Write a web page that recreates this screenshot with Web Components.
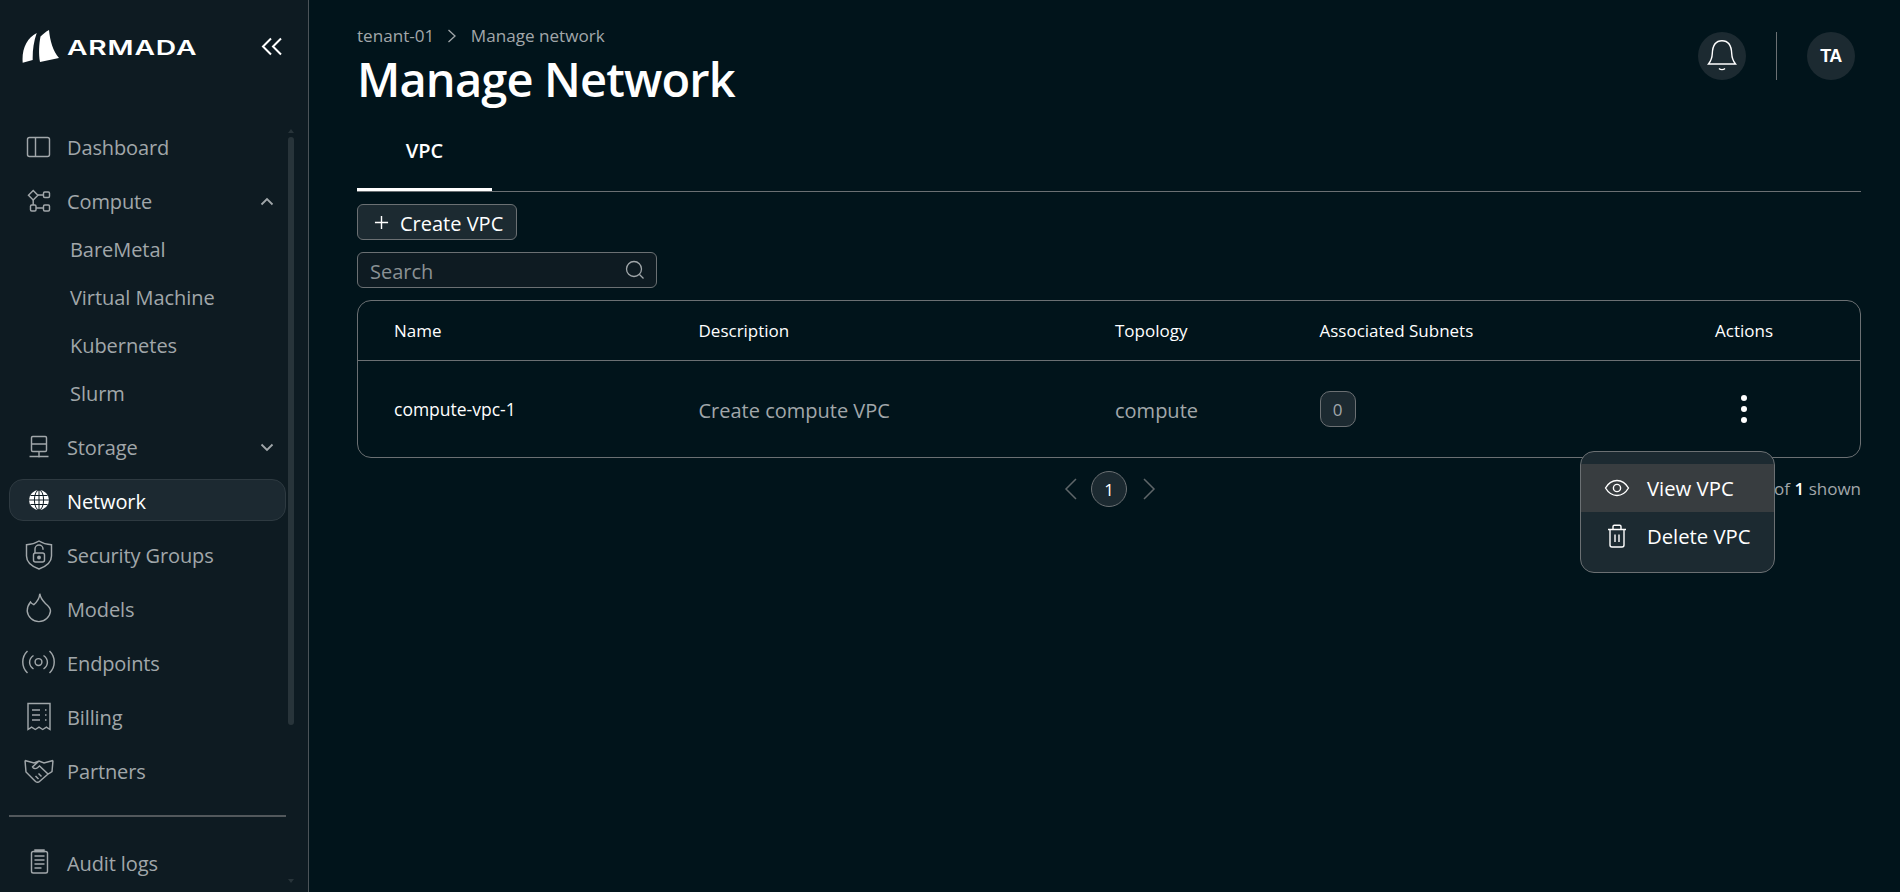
<!DOCTYPE html>
<html lang="en"><head><meta charset="utf-8"><title>Manage Network</title>
<style>
html,body{margin:0;height:100%;background:#01141b;overflow:hidden}
body{font-family:"Open Sans","Noto Sans",sans-serif;color:#fff}
app-shell{height:892px}
</style></head><body>
<app-shell>
  <app-sidebar slot="sidebar">
    <nav-item label="Dashboard" icon="dashboard"></nav-item>
    <nav-item label="Compute" icon="compute" caret="up" style="margin-bottom:4px"></nav-item>
    <nav-sub>BareMetal</nav-sub>
    <nav-sub>Virtual Machine</nav-sub>
    <nav-sub>Kubernetes</nav-sub>
    <nav-sub>Slurm</nav-sub>
    <nav-item label="Storage" icon="storage" caret="down" style="margin-top:8px;margin-bottom:11px"></nav-item>
    <nav-item label="Network" icon="network" active style="margin-bottom:13px"></nav-item>
    <nav-item label="Security Groups" icon="security"></nav-item>
    <nav-item label="Models" icon="models"></nav-item>
    <nav-item label="Endpoints" icon="endpoints"></nav-item>
    <nav-item label="Billing" icon="billing"></nav-item>
    <nav-item label="Partners" icon="partners" style="margin-bottom:0"></nav-item>
    <nav-item slot="footer" label="Audit logs" icon="audit"></nav-item>
  </app-sidebar>
  <page-header></page-header>
  <page-tabs></page-tabs>
  <vpc-toolbar></vpc-toolbar>
  <vpc-table></vpc-table>
</app-shell>
<script>
const ICONS={
dashboard:'<rect x="6.5" y="8.5" width="22" height="19" rx="2"/><path d="M14.5 8.5v19"/>',
compute:'<path d="M12.2 7.5l4.7 4.7-4.7 4.7-4.7-4.7z"/><rect x="22.5" y="9" width="6" height="5.5" rx="1.2"/><rect x="9.5" y="22" width="5.5" height="6" rx="1.2"/><rect x="22.5" y="22" width="6" height="6" rx="1.2"/><path d="M17 12h5.500M15 25h7.500M12.200 17v5"/>',
storage:'<rect x="10.500" y="7.500" width="15" height="15" rx="1.200"/><path d="M10.500 15h15M18 22.500v6M8.500 27.500h19"/>',
network:'<circle cx="18" cy="18" r="10" fill="#fff" stroke="none"/><g stroke="#0f1c23" stroke-width="1"><ellipse cx="18" cy="18" rx="4.600" ry="10"/><path d="M18 8v20M8 18h20M9.500 13.500h17M9.500 22.500h17"/></g>',
security:'<path d="M18 4C22 6.500 26 7.500 30.500 7.800V19C30.500 25.500 25 29.500 18 32 11 29.500 5.500 25.500 5.500 19V7.800C10 7.500 14 6.500 18 4z"/><rect x="12.500" y="16" width="11" height="9" rx="2"/><path d="M14 16v-4a4 4 0 0 1 8 0v.8"/><circle cx="18" cy="20.500" r="1.200" fill="currentColor"/>',
models:'<path d="M18.800 2.700C19.500 8 22 10 25 13 28 15.500 29.500 17 29.500 20A11.700 11.700 0 0 1 6.200 20C6.200 16.500 7.500 13.500 9.500 11 10 12 11.500 13 12.800 13.700 15.800 11 18.500 7 18.800 2.700z"/>',
endpoints:'<circle cx="17.500" cy="17" r="3.400"/><path d="M12.500 10.500C7.300 14 7.300 20.500 12.500 24M22.500 10.500C27.700 14 27.700 20.500 22.500 24M6.500 6C.2 12 .2 22 6.500 28M28.500 6C34.800 12 34.800 22 28.500 28"/>',
billing:'<path d="M7 4.500h22v26l-3.600-2.400-3.700 2.400-3.700-2.400-3.700 2.400-3.700-2.400L7 30.500z"/><path d="M11 11h8M11 16h8M11 21h8M24 11h1.500M24 16h1.500M24 21h1.500"/>',
partners:'<path d="M4 7.500l9 2.500 5-2 5 2 9-2.500M4 7.500L5 19l9.500 9.500c1.300 1 3 1 4 0l8-7 4.500-3L32 7.500M18 8l-6.500 6c1 2 3.500 2 5 .7l2-1.700 8.500 8M20.500 23.500l-3-3M17.500 26l-3-3"/>',
audit:'<rect x="10.500" y="6.500" width="16" height="21.500" rx="1.800"/><path d="M14 6.500h9v-1.500h-9z" fill="currentColor"/><path d="M13.500 11h10M13.500 15h10M13.500 19h10M13.500 23h7"/>'
};
const def=(n,c)=>customElements.define(n,c);
const mk=(h,css)=>{const t=document.createElement('template');t.innerHTML=`<style>${css}</style>${h}`;return t};

def('app-shell',class extends HTMLElement{connectedCallback(){
 const r=this.attachShadow({mode:'open'});
 r.appendChild(mk(`<slot name="sidebar"></slot><main><slot></slot></main>`,`
 :host{display:flex;width:1900px;height:892px;overflow:hidden}
 main{flex:1;min-width:0;box-sizing:border-box;padding:24px 39px 0 48px;display:flex;flex-direction:column}
 `).content.cloneNode(true));
}});

def('app-sidebar',class extends HTMLElement{connectedCallback(){
 const r=this.attachShadow({mode:'open'});
 r.appendChild(mk(`
 <div class="brand">
  <svg class="logo" width="40" height="36" viewBox="0 0 40 36" aria-hidden="true">
   <path d="M.700 34.700C-.500 21 5 10 14.700 5 11.500 14 10.500 23 10.700 32z" fill="#fff"/>
   <path d="M18 34C16.500 26 17 16 18.500 8.500 21 6 24 3.500 27 2 28 13 31 23 37 30z" fill="#fff"/>
  </svg>
  <span class="word">ARMADA</span>
  <svg class="collapse" width="22" height="20" viewBox="0 0 22 20" fill="none" stroke="#fff" stroke-width="2" aria-hidden="true"><path d="M10 1.500L2 9.500l8 8M20 1.500l-8 8 8 8"/></svg>
 </div>
 <div class="scroller">
  <div class="list"><slot></slot><hr><slot name="footer"></slot></div>
  <div class="bar"><i class="up"></i><b></b><i class="down"></i></div>
 </div>`,`
 :host{display:flex;flex-direction:column;flex:none;width:309px;height:892px;box-sizing:border-box;background:#0e1b22;border-right:1px solid #4b5358;overflow:hidden}
 .brand{height:126px;flex:none;display:flex;align-items:flex-start;padding:28px 0 0 22px;box-sizing:border-box;position:relative}
 .logo{flex:none}
 .word{font:600 20px/1 Inter,"Liberation Sans",sans-serif;letter-spacing:.6px;margin:10px 0 0 5px;transform:scaleX(1.41);transform-origin:left;display:block}
 .collapse{position:absolute;left:261px;top:37px}
 .scroller{flex:1;display:flex;min-height:0;padding-left:9px}
 .list{width:277px;flex:none;display:flex;flex-direction:column}
 hr{width:100%;height:2px;border:0;background:#52585c;margin:23px 0 25px;flex:none}
 .bar{width:6px;margin-left:2px;position:relative;display:flex;flex-direction:column;align-items:center}
 .bar b{display:block;position:absolute;top:11px;left:0;width:6px;height:588px;border-radius:3px;background:#28343a}
 .up,.down{position:absolute;left:0;width:0;height:0;border-left:3px solid transparent;border-right:3px solid transparent}
 .up{top:3px;border-bottom:4px solid #28343a}
 .down{top:753px;border-top:4px solid #28343a}
 `).content.cloneNode(true));
}});

def('nav-item',class extends HTMLElement{connectedCallback(){
 const r=this.attachShadow({mode:'open'});
 const caret=this.getAttribute('caret');
 const car=caret?`<svg class="caret" width="14" height="9" viewBox="0 0 14 9" fill="none" stroke="currentColor" stroke-width="1.800"><path d="${caret==='up'?'M1.500 7.500L7 2l5.500 5.500':'M1.500 1.500L7 7l5.500-5.500'}"/></svg>`:'';
 r.appendChild(mk(`<svg class="ic" width="36" height="36" viewBox="0 0 36 36" fill="none" stroke="currentColor" stroke-width="1.450" aria-hidden="true">${ICONS[this.getAttribute('icon')]}</svg><span>${this.getAttribute('label')}</span>${car}`,`
 :host{display:flex;align-items:center;height:42px;margin-bottom:12px;box-sizing:border-box;color:#a1a7aa;font-size:20px;position:relative;border:1px solid transparent;border-radius:14px;flex:none;letter-spacing:-.12px}
 :host([active]){background:#1c2931;border-color:#2e3a41;color:#fff;font-weight:500}
 :host([active]) span{padding-top:2px}
 .ic{flex:none;margin-left:10.500px}
 span{margin-left:10.500px;white-space:nowrap}
 .caret{position:absolute;left:250px;top:16px}
 `).content.cloneNode(true));
}});

def('nav-sub',class extends HTMLElement{connectedCallback(){
 const r=this.attachShadow({mode:'open'});
 r.appendChild(mk(`<slot></slot>`,`:host{display:block;height:48px;line-height:48px;padding-left:61px;color:#a1a7aa;font-size:20px;flex:none;white-space:nowrap;letter-spacing:-.05px}`).content.cloneNode(true));
}});

def('page-header',class extends HTMLElement{connectedCallback(){
 const r=this.attachShadow({mode:'open'});
 r.appendChild(mk(`
 <div><div class="crumbs"><span>tenant-01</span><svg width="10" height="16" viewBox="0 0 10 16" fill="none" stroke="#a1a7aa" stroke-width="1.300"><path d="M1.500 2l6.500 6-6.500 6"/></svg><span>Manage network</span></div>
 <h1>Manage Network</h1></div>
 <div class="acts">
  <span class="circ"><svg width="32" height="34" viewBox="0 0 32 34" fill="none" stroke="#fff" stroke-width="1.400"><path d="M2.500 25h27c-2.600-3.200-3.600-6-3.800-10.500C25.400 7 22.500 1.800 16 1.800S6.600 7 6.300 14.500C6.100 19 5.100 21.800 2.500 25z"/><path d="M13 29.500c1.500 1.500 4.500 1.500 6 0"/></svg></span>
  <i class="sep"></i>
  <span class="circ ta">TA</span>
 </div>`,`
 :host{display:flex;justify-content:space-between;align-items:flex-start;flex:none;height:88px}
 .crumbs{display:flex;align-items:center;height:23px;font-size:17.100px;color:#a1a7aa;margin-bottom:1px}
 .crumbs svg{margin:0 13.500px 0 13px}
 h1{margin:0;font-size:47px;line-height:63px;font-weight:600;letter-spacing:-.85px;white-space:nowrap}
 .acts{display:flex;align-items:center;margin:8px 6px 0 0}
 .circ{width:48px;height:48px;border-radius:50%;background:#1c2a31;display:flex;align-items:center;justify-content:center}
 .ta{font:700 18px/1 "Liberation Sans",sans-serif;letter-spacing:-.5px;color:#fff}
 .sep{width:1px;height:48px;background:#6b7073;margin:0 30px}
 `).content.cloneNode(true));
}});

def('page-tabs',class extends HTMLElement{connectedCallback(){
 const r=this.attachShadow({mode:'open'});
 r.appendChild(mk(`<div class="tab">VPC</div>`,`
 :host{display:block;height:80px;box-sizing:border-box;border-bottom:1px solid #6b7073;flex:none}
 .tab{width:135px;height:79px;box-sizing:border-box;border-bottom:3px solid #fff;padding-top:23px;text-align:center;font-size:20px;line-height:32px;font-weight:600;margin-bottom:-1px}
 `).content.cloneNode(true));
}});

def('vpc-toolbar',class extends HTMLElement{connectedCallback(){
 const r=this.attachShadow({mode:'open'});
 r.appendChild(mk(`
 <button><svg width="15" height="15" viewBox="0 0 16 16" stroke="#fff" stroke-width="1.500" fill="none"><path d="M8 1v14M1 8h14"/></svg><span>Create VPC</span></button>
 <label class="search"><input placeholder="Search" aria-label="Search"><svg width="20" height="20" viewBox="0 0 20 20" fill="none" stroke="#a1a7aa" stroke-width="1.300"><circle cx="9" cy="9" r="7.500"/><path d="M14.500 14.500l4 4"/></svg></label>`,`
 :host{display:flex;flex-direction:column;align-items:flex-start;gap:12px;margin-top:12px;flex:none}
 button{height:36px;width:160px;box-sizing:border-box;padding:0 0 0 16px;display:flex;align-items:center;gap:11px;background:#1c2a31;border:1px solid #6b7073;border-radius:6px;color:#fff;font:20px "Open Sans",sans-serif;white-space:nowrap}
 button span{padding-top:2px}
 .search{width:300px;height:36px;box-sizing:border-box;display:flex;align-items:center;background:#0e1b22;border:1px solid #6b7073;border-radius:6px;padding:0 11px 0 12px}
 input{flex:1;min-width:0;background:none;border:0;outline:0;color:#fff;font:20px "Open Sans",sans-serif;padding:2px 0 0}
 input::placeholder{color:#8a9194;opacity:1}
 `).content.cloneNode(true));
}});

def('vpc-table',class extends HTMLElement{connectedCallback(){
 const r=this.attachShadow({mode:'open'});
 r.appendChild(mk(`
 <div class="tbl">
  <div class="row head"><div>Name</div><div>Description</div><div>Topology</div><div>Associated Subnets</div><div class="ac">Actions</div></div>
  <div class="row body"><div class="nm">compute-vpc-1</div><div class="t">Create compute VPC</div><div class="t">compute</div><div><span class="badge">0</span></div><div class="dots"><i></i><i></i><i></i></div></div>
 </div>
 <div class="pager">
  <div></div>
  <div class="pages">
   <svg width="16" height="24" viewBox="0 0 16 24" fill="none" stroke="#5f6669" stroke-width="1.500"><path d="M13 2L3 12l10 10"/></svg>
   <span class="pg">1</span>
   <svg class="nx" width="16" height="24" viewBox="0 0 16 24" fill="none" stroke="#5f6669" stroke-width="1.500"><path d="M3 2l10 10L3 22"/></svg>
  </div>
  <div class="shown">1 of <b>1</b> shown</div>
 </div>
 <action-menu></action-menu>`,`
 :host{display:block;margin-top:12px;position:relative;flex:none}
 .tbl{border:1px solid #6b7073;border-radius:14px;height:158px;box-sizing:border-box}
 .row{display:grid;grid-template-columns:304.500px 416.500px 204.500px 395.500px 1fr;padding-left:36px;align-items:center}
 .head{height:59px;border-bottom:1px solid #6b7073;font-size:17px;color:#fff}
 .body{height:96px;font-size:20px;color:#a1a7aa}
 .t{padding-top:2px}
 .nm{font-size:17.500px;color:#fff}
 .badge{display:flex;align-items:center;justify-content:center;width:36px;height:36px;box-sizing:border-box;background:#1c2a31;border:1px solid #6b7073;border-radius:10px;font-size:17px}
 .dots{display:flex;flex-direction:column;gap:5px;align-items:center;width:60px;margin-left:-1px}
 .dots i{width:6px;height:6px;border-radius:50%;background:#fff}
 .pager{display:grid;grid-template-columns:1fr auto 1fr;align-items:center;margin-top:13px;height:36px}
 .pages{display:flex;align-items:center;gap:12px}
 .nx{margin-left:2px;margin-right:-2px}
 .pg{width:36px;height:36px;box-sizing:border-box;border:1px solid #6b7073;border-radius:50%;background:#1c2a31;display:flex;align-items:center;justify-content:center;font-size:17px}
 .shown{justify-self:end;font-size:17px;color:#a1a7aa;margin-bottom:2px}
 .shown b{color:#fff;font-weight:600}
 action-menu{position:absolute;top:151px;right:86px}
 `).content.cloneNode(true));
}});

def('action-menu',class extends HTMLElement{connectedCallback(){
 const r=this.attachShadow({mode:'open'});
 r.appendChild(mk(`
 <div class="it hi"><svg width="26" height="20" viewBox="0 0 26 20" fill="none" stroke="#fff" stroke-width="1.400"><path d="M1.500 10C4.500 5 8.500 2.500 13 2.500S21.500 5 24.500 10c-3 5-7 7.500-11.500 7.500S4.500 15 1.500 10z"/><circle cx="13" cy="10" r="3.600"/></svg><span>View VPC</span></div>
 <div class="it"><svg width="26" height="26" viewBox="0 0 26 26" fill="none" stroke="#fff" stroke-width="1.400"><path d="M4 6.500h18M9 6.500V3.500c0-.8.500-1.300 1.300-1.300h5.400c.8 0 1.300.5 1.300 1.300v3M6 6.500V22c0 1.200.8 2 2 2h10c1.200 0 2-.8 2-2V6.500M11 11.500v7.500M15 11.500v7.500"/></svg><span>Delete VPC</span></div>`,`
 :host{display:block;width:195px;height:122px;box-sizing:border-box;padding-top:12px;background:#1c2a31;border:1px solid #6b7073;border-radius:14px;overflow:hidden}
 .it{height:48px;display:flex;align-items:center;font-size:20.300px;color:#fff;white-space:nowrap;font-weight:500}
 .hi{background:#383d40}
 svg{flex:none;margin-left:23px}
 span{margin-left:17px}
 `).content.cloneNode(true));
}});
</script>
</body></html>
